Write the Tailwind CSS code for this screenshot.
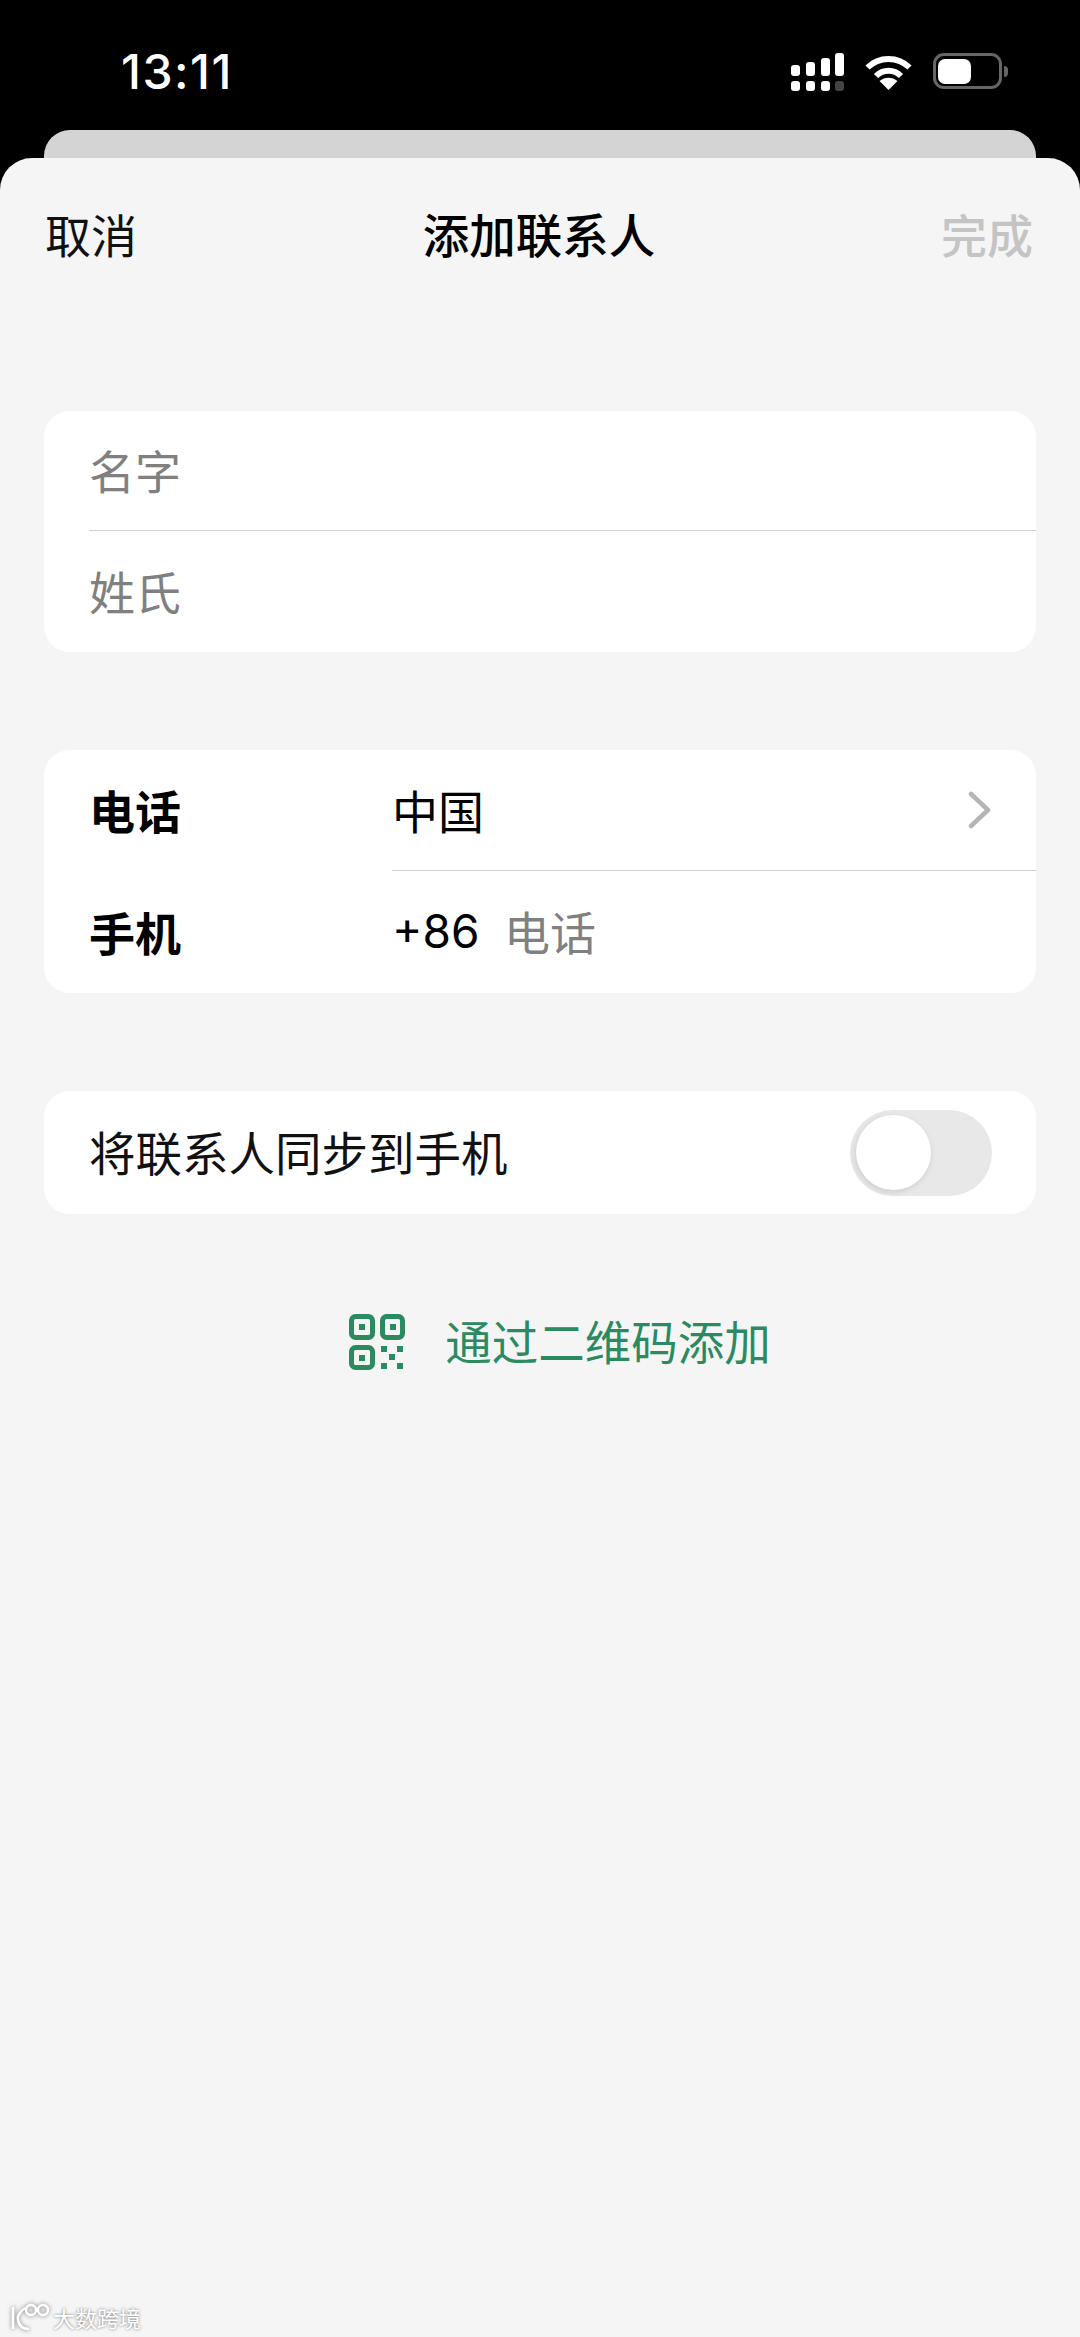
<!DOCTYPE html>
<html lang="zh">
<head>
<meta charset="utf-8">
<script src="https://cdn.jsdelivr.net/npm/@tailwindcss/browser@4"></script>
</head>
<body class="bg-black">
<div class="w-[1080px] h-[2337px] bg-black flex flex-col overflow-hidden relative font-['Noto_Sans_CJK_SC','Noto_Sans',sans-serif] text-[46px] leading-none text-[#111]">
  <div class="h-[130px] shrink-0 flex items-start justify-between pl-[121px] pr-[72px] pt-[53px]">
    <span class="font-['Inter',sans-serif] font-medium text-[48px] leading-[38px] text-white tracking-[1.5px]">13:11</span>
    <div class="flex items-start gap-[21px]">
      <svg width="53" height="38" viewBox="0 0 53 38" fill="#fff">
        <rect x="0" y="12" width="9" height="11" rx="3"/><rect x="15" y="9" width="9" height="14" rx="3"/><rect x="30" y="5" width="9" height="18" rx="3"/><rect x="44" y="0" width="9" height="23" rx="3"/>
        <rect x="0" y="28" width="9" height="10" rx="3"/><rect x="15" y="28" width="9" height="10" rx="3"/><rect x="30" y="28" width="9" height="10" rx="3"/><rect x="44" y="28" width="9" height="10" rx="3" fill="#444"/>
      </svg>
      <svg width="47" height="36" viewBox="0 0 47 36" class="mt-[2px]" fill="none">
        <path d="M2.500 12.500C14 1 33 1 44.500 12.500" stroke="#fff" stroke-width="6"/>
        <path d="M11 21C18 14 29 14 36 21" stroke="#fff" stroke-width="6"/>
        <path d="M23.500 35L14.500 26C19.500 21.500 27.500 21.500 32.500 26Z" fill="#fff"/>
      </svg>
      <div class="flex items-center gap-[2px]">
        <div class="w-[69px] h-[36px] rounded-[11px] border-[3px] border-[#666] flex items-center pl-[2px]">
          <div class="w-[33px] h-[25px] rounded-[7px] bg-white"></div>
        </div>
        <div class="w-[4px] h-[11px] rounded-r-[4px] bg-[#666]"></div>
      </div>
    </div>
  </div>
  <div class="h-[28px] shrink-0 mx-[44px] rounded-t-[26px] bg-[#d4d4d4]"></div>
  <div class="flex-1 bg-[#f5f5f5] rounded-t-[32px] flex flex-col">
    <div class="h-[154px] shrink-0 flex items-center justify-between pl-[45px] pr-[47px] pb-[4px]">
      <span class="w-[120px]">取消</span>
      <span class="font-medium text-[46.500px] text-black">添加联系人</span>
      <span class="w-[120px] text-right text-[#c4c4c4] font-medium">完成</span>
    </div>
    <div class="mt-[99px] mx-[44px] bg-white rounded-[26px] pl-[45px] text-[#808080]">
      <div class="h-[120px] flex items-center border-b border-[#d0d0d0] pb-[3px]">名字</div>
      <div class="h-[121px] flex items-center pb-[3px]">姓氏</div>
    </div>
    <div class="mt-[98px] mx-[44px] bg-white rounded-[26px] flex">
      <div class="w-[348px] pl-[45px] font-semibold text-black">
        <div class="h-[121px] flex items-center pb-[3px]">电话</div>
        <div class="h-[122px] flex items-center pb-[3px]">手机</div>
      </div>
      <div class="flex-1">
        <div class="h-[121px] flex items-center justify-between pr-[44px] border-b border-[#d0d0d0] text-black">
          <span class="pb-[3px]">中国</span>
          <svg width="24" height="38" viewBox="0 0 24 38" fill="none"><path d="M3 3L20 19L3 35" stroke="#b5b5b5" stroke-width="4.500" stroke-linecap="round" stroke-linejoin="round"/></svg>
        </div>
        <div class="h-[122px] flex items-center pb-[2px]">
          <span class="font-['Inter',sans-serif] text-black w-[112px] text-[46px]">+86</span>
          <span class="text-[#808080] pb-[2px]">电话</span>
        </div>
      </div>
    </div>
    <div class="mt-[98px] mx-[44px] h-[123px] bg-white rounded-[26px] flex items-center justify-between pl-[45px] pr-[44px] text-[#111]">
      <span class="text-[46.500px] pb-[3px]">将联系人同步到手机</span>
      <div class="w-[142px] h-[86px] rounded-full bg-[#e8e8e8] flex items-center pl-[6px]">
        <div class="w-[75px] h-[75px] rounded-full bg-white shadow-[-1px_2px_6px_rgba(0,0,0,0.12)]"></div>
      </div>
    </div>
    <div class="mt-[100px] flex items-center justify-center gap-[40px] text-[#2c8a60] pl-[40px]">
      <svg width="56" height="56" viewBox="0 0 56 56" fill="none">
        <rect x="2.500" y="2.500" width="21" height="21" rx="4" stroke="#2c8a60" stroke-width="5"/>
        <rect x="33.500" y="2.500" width="20" height="21" rx="4" stroke="#2c8a60" stroke-width="5"/>
        <rect x="2.500" y="33.500" width="21" height="20" rx="4" stroke="#2c8a60" stroke-width="5"/>
        <rect x="10" y="10" width="6" height="6" fill="#2c8a60"/><rect x="41" y="10" width="6" height="6" fill="#2c8a60"/><rect x="10" y="41" width="6" height="6" fill="#2c8a60"/>
        <rect x="32" y="32" width="6" height="6" fill="#2c8a60"/><rect x="48" y="32" width="6" height="6" fill="#2c8a60"/><rect x="40" y="40" width="6" height="6" fill="#2c8a60"/><rect x="32" y="49" width="6" height="6" fill="#2c8a60"/><rect x="48" y="49" width="6" height="6" fill="#2c8a60"/>
      </svg>
      <span class="text-[46.500px] pb-[3px]">通过二维码添加</span>
    </div>
    <div class="mt-auto mb-[4px] pl-[10px] flex items-center gap-[1px] h-[32px] text-white text-[22px] [text-shadow:0_0_3px_rgba(0,0,0,0.55)]">
      <svg width="42" height="30" viewBox="0 0 42 30" fill="none" stroke="#fff" stroke-width="2.500" class="drop-shadow-[0_0_2px_rgba(0,0,0,0.5)]">
        <path d="M3 5V27M15 6C9 10 7 15 8 18C9 24 13 27 19 27"/>
        <circle cx="21" cy="8" r="5"/><circle cx="33" cy="8" r="5"/>
      </svg>
      <span>大数跨境</span>
    </div>
  </div>
</div>
</body>
</html>
